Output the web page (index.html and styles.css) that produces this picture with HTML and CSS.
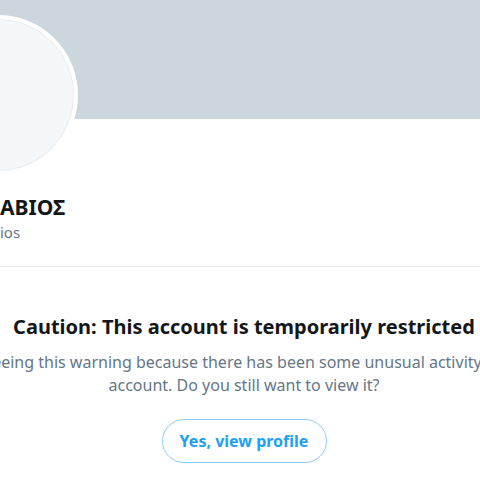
FILE: index.html
```html
<!DOCTYPE html>
<html lang="en">
<head>
<meta charset="utf-8">
<title>Profile</title>
<link rel="stylesheet" href="styles.css">
</head>
<body>
<main class="profile">
  <div class="banner"></div>
  <div class="avatar"></div>
  <section class="info">
    <div class="name">ΑΒΙΟΣ</div>
    <div class="handle">ios</div>
  </section>
  <section class="caution">
    <h2 class="title">Caution: This account is temporarily restricted</h2>
    <p class="message">
      <span class="line">You're seeing this warning because there has been some unusual activity from this</span>
      <span class="line">account. Do you still want to view it?</span>
    </p>
    <button class="view-btn" type="button">Yes, view profile</button>
  </section>
</main>
</body>
</html>
```

FILE: styles.css
```css
html, body {
  margin: 0;
  padding: 0;
  background: #ffffff;
  overflow: hidden;
}

body {
  width: 480px;
  height: 480px;
  font-family: "Noto Sans", "Open Sans", "DejaVu Sans", sans-serif;
  color: #14171a;
}

.profile {
  position: relative;
  width: 480px;
}

.banner {
  height: 119px;
  background: #ccd6dd;
}

.avatar {
  position: absolute;
  left: -82px;
  top: 15px;
  width: 152px;
  height: 152px;
  border: 4px solid #ffffff;
  border-radius: 50%;
  background: #f5f8fa;
  box-shadow: inset 0 0 0 1px #e8edf1;
}

.info {
  padding: 75px 0 24px 0;
  border-bottom: 1px solid #e6ecf0;
}

.name {
  font-size: 21px;
  font-weight: 700;
  line-height: 26px;
  color: #14171a;
}

.handle {
  font-size: 15px;
  line-height: 20px;
  color: #657786;
  margin-top: 2px;
}

.caution {
  display: flex;
  flex-direction: column;
  align-items: center;
  padding: 47px 0 0 8px;
}

.title {
  margin: 0;
  font-size: 20px;
  font-weight: 700;
  line-height: 26px;
  white-space: nowrap;
  color: #14171a;
}

.message {
  display: flex;
  flex-direction: column;
  align-items: center;
  margin: 11px 0 0 0;
  font-size: 16px;
  line-height: 23px;
  color: #657786;
}

.line {
  white-space: nowrap;
}

.view-btn {
  margin-top: 22px;
  width: 165px;
  height: 44px;
  border: 1px solid #8ecdf8;
  border-radius: 22px;
  background: #ffffff;
  color: #1da1f2;
  font-family: inherit;
  font-size: 16px;
  font-weight: 700;
  padding: 0;
}
```
